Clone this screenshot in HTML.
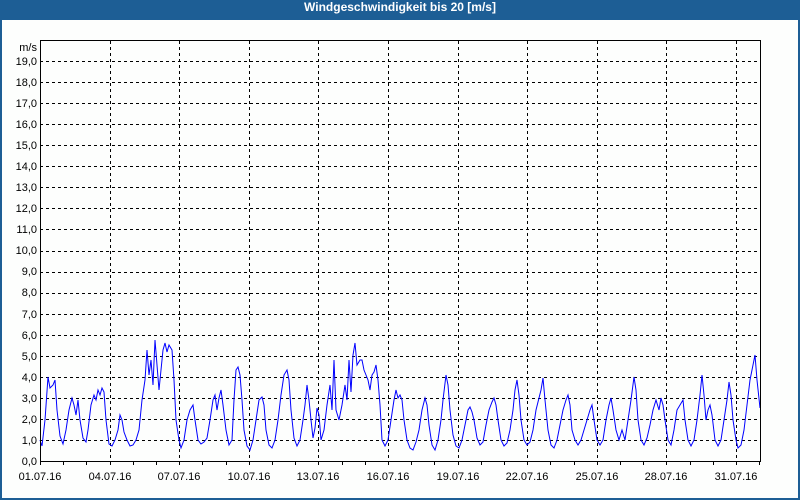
<!DOCTYPE html>
<html><head><meta charset="utf-8"><style>
html,body{margin:0;padding:0;background:#fff;}
#w{position:relative;width:800px;height:500px;background:#1d5e95;overflow:hidden;}
#t{position:absolute;left:0;top:0;width:800px;height:20px;line-height:21px;text-align:center;color:#fff;font:bold 12px "Liberation Sans",sans-serif;}
#in{position:absolute;left:2px;top:20px;width:796px;height:478px;background:#fdfefd;}
svg{position:absolute;left:0;top:0;}
text{font-family:"Liberation Sans",sans-serif;font-size:11px;fill:#000;}
</style></head><body>
<div id="w"><div id="t">Windgeschwindigkeit bis 20 [m/s]</div><div id="in"></div>
<svg id="s" width="800" height="500" xmlns="http://www.w3.org/2000/svg">
<g id="grid" stroke="#000" stroke-width="1" stroke-dasharray="3,3" shape-rendering="crispEdges"></g>
<g id="ticks" stroke="#000" stroke-width="1" shape-rendering="crispEdges"></g>
<polyline fill="none" stroke="#0000ff" stroke-width="1" points="40,440 42,446 45,420 48,377 50,388 53,385 55,380 57,410 60,436 63,444 66,430 69,410 72,398 74,405 76,415 78,400 80,420 83,438 86,442 88,430 91,405 94,395 96,400 98,390 100,395 102,388 104,392 106,420 109,444 112,446 115,440 118,430 120,415 122,420 124,432 127,440 130,446 133,445 136,440 139,430 142,400 145,380 147,350 149,375 151,360 153,385 155,340 157,365 159,390 161,370 163,350 165,343 167,352 169,345 172,350 174,380 176,420 179,440 181,448 184,440 187,420 190,410 193,405 195,420 198,440 201,444 204,442 207,438 210,420 213,400 215,395 217,410 219,398 221,390 223,405 226,430 229,445 232,440 234,400 236,370 238,367 240,375 242,400 244,430 247,446 250,450 253,440 256,420 259,400 262,397 264,405 266,430 269,445 272,448 275,440 278,420 281,395 284,375 287,370 289,380 291,410 294,438 297,446 300,440 303,420 305,405 307,385 309,400 311,420 313,438 315,428 317,408 319,415 321,440 324,430 327,405 330,385 332,410 334,360 336,410 339,420 342,405 345,385 347,400 349,360 351,392 353,355 355,343 357,365 360,360 362,360 364,370 366,375 368,380 370,390 372,375 374,372 376,365 378,380 380,405 382,440 385,446 388,440 391,420 394,400 396,390 398,398 400,395 402,400 404,420 407,440 410,448 413,450 416,442 419,430 422,410 425,398 427,405 429,425 432,445 435,450 438,440 441,420 443,400 446,375 448,385 450,410 453,435 456,446 459,448 462,440 465,425 468,410 470,407 472,412 474,420 477,438 480,445 483,442 486,425 489,410 492,402 494,398 496,405 498,420 501,440 504,446 507,443 510,430 513,410 515,390 517,380 519,395 521,420 524,440 527,445 530,442 533,430 536,410 539,398 541,390 543,378 545,400 548,430 551,445 554,448 557,440 560,425 563,410 566,400 568,395 570,405 572,430 575,440 578,445 581,440 584,430 587,420 590,410 592,405 594,420 597,440 600,445 603,440 606,420 609,405 611,398 613,410 616,430 619,440 622,430 625,440 628,420 631,400 634,377 636,390 638,420 641,440 644,445 647,438 650,425 653,410 656,400 659,410 661,398 663,405 665,420 668,440 671,445 674,430 677,410 680,405 683,400 685,420 688,440 691,446 694,440 697,420 700,395 702,375 704,395 706,420 708,410 710,405 712,415 715,440 718,446 721,440 724,420 727,400 729,382 731,395 733,420 736,440 738,448 741,445 744,430 747,405 750,380 753,365 755,355 757,380 760,408"/>
<rect x="40.5" y="40.5" width="720" height="421" fill="none" stroke="#000" stroke-width="1"/>
<g text-anchor="end">
<text x="37" y="51">m/s</text>
<text x="37" y="65">19,0</text><text x="37" y="86">18,0</text><text x="37" y="107">17,0</text><text x="37" y="128">16,0</text><text x="37" y="149">15,0</text><text x="37" y="170">14,0</text><text x="37" y="191">13,0</text><text x="37" y="212">12,0</text><text x="37" y="233">11,0</text><text x="37" y="254">10,0</text><text x="37" y="275">9,0</text><text x="37" y="296">8,0</text><text x="37" y="318">7,0</text><text x="37" y="339">6,0</text><text x="37" y="360">5,0</text><text x="37" y="381">4,0</text><text x="37" y="402">3,0</text><text x="37" y="423">2,0</text><text x="37" y="444">1,0</text><text x="37" y="465">0,0</text>
</g>
<g text-anchor="middle">
<text x="40" y="480">01.07.16</text><text x="110" y="480">04.07.16</text><text x="179" y="480">07.07.16</text><text x="249" y="480">10.07.16</text><text x="318" y="480">13.07.16</text><text x="388" y="480">16.07.16</text><text x="458" y="480">19.07.16</text><text x="527" y="480">22.07.16</text><text x="597" y="480">25.07.16</text><text x="666" y="480">28.07.16</text><text x="736" y="480">31.07.16</text>
</g>
</svg></div>
<script>
var ns="http://www.w3.org/2000/svg",g=document.getElementById('grid'),tk=document.getElementById('ticks');
function L(p,x1,y1,x2,y2){var l=document.createElementNS(ns,'line');l.setAttribute('x1',x1);l.setAttribute('y1',y1);l.setAttribute('x2',x2);l.setAttribute('y2',y2);p.appendChild(l);}
for(var i=1;i<=19;i++){var y=Math.round(461-i*21.05)+0.5;L(g,40,y,760,y);}
for(var d=0;d<=31;d++){var x=Math.round(40+d*23.2)+0.5;if(d%3==0&&d>0)L(g,x,41,x,461);L(tk,x,461,x,465);}
</script>
</body></html>
